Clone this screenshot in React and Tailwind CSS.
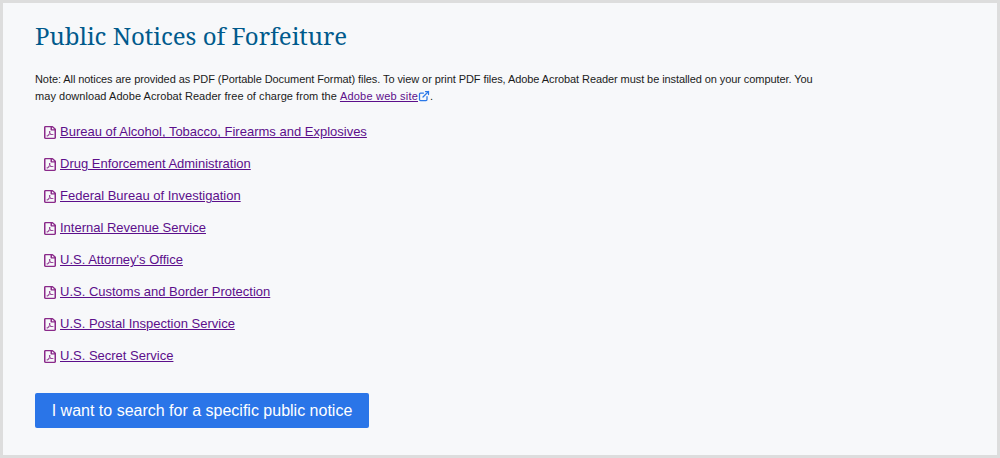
import { FaRegFilePdf } from 'react-icons/fa'
import { ExternalLink } from 'lucide-react'

const agencies = [
    'Bureau of Alcohol, Tobacco, Firearms and Explosives',
    'Drug Enforcement Administration',
    'Federal Bureau of Investigation',
    'Internal Revenue Service',
    "U.S. Attorney's Office",
    'U.S. Customs and Border Protection',
    'U.S. Postal Inspection Service',
    'U.S. Secret Service',
]

function App() {
    return (
        <div className="h-[458px] border-[3px] border-[#dddddd] bg-[#f7f8fa] pl-[32px] pt-[17px] font-['Liberation_Sans',Arial,sans-serif]">
            <h1 className="text-[24px] leading-[32px] text-[#005a8c] font-['Noto_Serif','DejaVu_Serif',serif]">Public Notices of Forfeiture</h1>

            <p className="mt-[19px] w-[790px] text-[11px] leading-[17px] text-[#1b1b1b]">
                <span className="tracking-[-0.08px]">Note: All notices are provided as PDF (Portable Document Format) files. To view or print PDF files, Adobe Acrobat Reader must be installed on your computer. You</span>
                <br />
                <span className="tracking-[0.05px]">may download Adobe Acrobat Reader free of charge from the</span>{' '}
                <a href="#" className="text-[#5c0f8b] underline tracking-[0.2px]">Adobe web site</a>
                <ExternalLink strokeWidth={2.5} className="inline-block w-3 h-3 -mt-0.5 text-[#2b78e8]" />.
            </p>

            <ul className="mt-[11px] pl-[9px]">
                {agencies.map((name) => (
                    <li key={name} className="flex items-center h-[32px] text-[13px]">
                        <FaRegFilePdf preserveAspectRatio="none" className="w-[12px] h-[13px] mr-[4px] mt-[1px] text-[#8a2a8a]" />
                        <a href="#" className="text-[#5c0f8b] underline">{name}</a>
                    </li>
                ))}
            </ul>

            <button className="mt-[21px] w-[334px] h-[35px] rounded-[2px] bg-[#2a75e8] text-white text-[16px]">
                I want to search for a specific public notice
            </button>
        </div>
    )
}

export default App
